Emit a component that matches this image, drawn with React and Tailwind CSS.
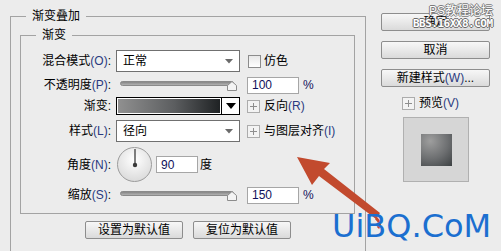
import React from 'react';

const ui = "font-['Liberation_Sans','Noto_Sans_CJK_SC',sans-serif]";

function Key({ children }) {
  return <span className="text-[#2a3a80]">{children}</span>;
}

function Label({ children }) {
  return <span className="w-[90px] shrink-0 text-right whitespace-nowrap">{children}</span>;
}

function Caret() {
  return (
    <svg width="8" height="5" viewBox="0 0 8 5" aria-hidden="true">
      <path d="M0 0h8L4 4.5z" fill="#6b6b6b" />
    </svg>
  );
}

function Select({ value }) {
  return (
    <div className="w-[124px] h-[22px] shrink-0 border border-[#707070] bg-white flex items-center justify-between pl-[6px] pr-[6px]">
      <span>{value}</span>
      <Caret />
    </div>
  );
}

function Slider() {
  return (
    <svg width="124" height="14" viewBox="0 0 124 14" className="shrink-0" aria-hidden="true">
      <defs>
        <linearGradient id="trk" x1="0" y1="0" x2="0" y2="1">
          <stop offset="0" stopColor="#7f7f7f" />
          <stop offset="1" stopColor="#b9b9b9" />
        </linearGradient>
      </defs>
      <rect x="4.5" y="3.5" width="113" height="4" rx="2" fill="url(#trk)" stroke="#8a8a8a" />
      <path d="M116 3.5 L120.5 7.5 V12.5 H111.5 V7.5 Z" fill="#f4f4f4" stroke="#8c8c8c" />
    </svg>
  );
}

function NumBox({ value, w = 'w-[52px]' }) {
  return (
    <div className={`${w} h-[17px] shrink-0 border border-[#a6a6a6] bg-white pl-[4px] flex items-center text-[#10105a]`}>
      {value}
    </div>
  );
}

function PlusBox() {
  return (
    <div className="w-[13px] h-[13px] shrink-0 border border-[#acacac] bg-[#f3f3f3] flex items-center justify-center">
      <svg width="7" height="7" viewBox="0 0 7 7" aria-hidden="true">
        <path d="M3.5 0v7M0 3.5h7" stroke="#8e8e8e" strokeWidth="1" />
      </svg>
    </div>
  );
}

function Dial() {
  return (
    <div className="ml-[1px] w-[35px] h-[35px] shrink-0 rounded-full border border-[#9c9c9c] bg-[radial-gradient(circle_at_50%_35%,#ffffff,#e4e4e4_60%,#d2d2d2)] flex justify-center">
      <svg width="6" height="19" viewBox="0 0 6 19" className="mt-[1px]" aria-hidden="true">
        <path d="M3 0v16" stroke="#4a4a4a" strokeWidth="1.4" />
        <circle cx="3" cy="16" r="2.2" fill="#3a3a3a" />
      </svg>
    </div>
  );
}

function Btn({ children, className = '' }) {
  return (
    <div className={`h-[18px] shrink-0 border border-[#8d8d8d] rounded-[2px] bg-[linear-gradient(#f7f7f7,#e9e9e9_50%,#dadada)] flex items-center justify-center ${className}`}>
      {children}
    </div>
  );
}

export default function App() {
  return (
    <div className={`${ui} relative w-[501px] h-[251px] overflow-hidden bg-[#ececec] text-[12px] leading-[14px] text-black flex`}>
      <div className="pl-[10px] pt-[9px]">
        <fieldset className="w-[356px] h-[270px] border border-[#a3a3a3] pl-[9px]">
          <legend className="ml-[6px] px-[6px] leading-[14px]">渐变叠加</legend>
          <fieldset className="mt-[5px] w-[335px] border border-[#a3a3a3] pt-[8px] pb-[9px]">
            <legend className="ml-[15px] px-[6px] leading-[14px]">渐变</legend>

            <div className="flex items-center h-[22px]">
              <Label>混合模式<Key>(O)</Key>:</Label>
              <div className="ml-[5px]"><Select value="正常" /></div>
              <div className="ml-[8px] w-[13px] h-[13px] border border-[#8c8c8c] bg-[linear-gradient(#e8e8e8,#ffffff)]" />
              <span className="ml-[3px]">仿色</span>
            </div>

            <div className="flex items-center h-[18px] mt-[4px]">
              <Label>不透明度<Key>(P)</Key>:</Label>
              <div className="ml-[5px]"><Slider /></div>
              <div className="ml-[7px]"><NumBox value="100" /></div>
              <span className="ml-[4px] text-[#10105a]">%</span>
            </div>

            <div className="flex items-center h-[18px] mt-[3px]">
              <Label>渐变:</Label>
              <div className="ml-[5px] w-[124px] h-[18px] border border-black bg-white flex">
                <div className="flex-1 m-[1px] bg-[linear-gradient(90deg,#909090,#5c5e60_55%,#1f2224)]" />
                <div className="w-[18px] border-l border-black flex items-center justify-center">
                  <svg width="10" height="6" viewBox="0 0 10 6" aria-hidden="true">
                    <path d="M0 0h10L5 6z" fill="#000" />
                  </svg>
                </div>
              </div>
              <div className="ml-[7px]"><PlusBox /></div>
              <span className="ml-[4px]">反向<Key>(R)</Key></span>
            </div>

            <div className="flex items-center h-[22px] mt-[5px]">
              <Label>样式<Key>(L)</Key>:</Label>
              <div className="ml-[5px]"><Select value="径向" /></div>
              <div className="ml-[7px]"><PlusBox /></div>
              <span className="ml-[4px]">与图层对齐<Key>(I)</Key></span>
            </div>

            <div className="flex items-center h-[35px] mt-[5px]">
              <Label>角度<Key>(N)</Key>:</Label>
              <div className="ml-[5px]"><Dial /></div>
              <div className="ml-[4px]"><NumBox value="90" w="w-[42px]" /></div>
              <span className="ml-[2px]">度</span>
            </div>

            <div className="flex items-center h-[18px] mt-[4px]">
              <Label>缩放<Key>(S)</Key>:</Label>
              <div className="ml-[5px]"><Slider /></div>
              <div className="ml-[7px]"><NumBox value="150" /></div>
              <span className="ml-[4px] text-[#10105a]">%</span>
            </div>
          </fieldset>

          <div className="mt-[7px] flex justify-center gap-[10px] pr-[9px]">
            <Btn className="w-[98px]">设置为默认值</Btn>
            <Btn className="w-[98px]">复位为默认值</Btn>
          </div>
        </fieldset>
      </div>

      <div className="ml-[15px] pt-[13px] flex flex-col">
        <Btn className="w-[109px]">确定</Btn>
        <Btn className="w-[109px] mt-[10px]">取消</Btn>
        <Btn className="w-[109px] mt-[10px]">新建样式<Key>(W)</Key>...</Btn>
        <div className="mt-[10px] ml-[21px] flex items-center h-[12px]">
          <PlusBox />
          <span className="ml-[4px]">预览<Key>(V)</Key></span>
        </div>
        <div className="mt-[8px] ml-[22px] w-[66px] h-[65px] border border-[#b0b0b0] bg-[#d6d6d6] flex items-center justify-center">
          <div className="w-[31px] h-[32px] bg-[radial-gradient(circle_at_30%_22%,#9e9e9e,#6c6e70_55%,#3d4143)]" />
        </div>
      </div>

      <svg className="absolute inset-0 pointer-events-none" width="501" height="251" viewBox="0 0 501 251" aria-hidden="true">
        <path d="M297 157 L330 163 L324 169 L380 213 L376 219 L319 176 L312 185 Z" fill="#c24a2e" />
        <path d="M376 218 q6 6 2 10" stroke="#c24a2e" strokeWidth="3" fill="none" />
      </svg>

      <div className="absolute left-[332px] top-[210px] font-['DejaVu_Sans',sans-serif] text-[32px] leading-none text-[#1b6fd0] whitespace-nowrap">
        UiBQ.CoM
      </div>
      <div className="absolute left-[429px] top-[4px] text-[12px] leading-[14px] text-white whitespace-nowrap [text-shadow:1px_0_#7a7a7a,-1px_0_#7a7a7a,0_1px_#7a7a7a,0_-1px_#7a7a7a]">
        PS教程论坛
      </div>
      <div className="absolute left-[413px] top-[18px] font-['DejaVu_Sans_Mono',monospace] font-bold text-[11px] leading-[12px] text-white whitespace-nowrap tracking-[-0.5px] [text-shadow:1px_0_#6a6a6a,-1px_0_#6a6a6a,0_1px_#6a6a6a,0_-1px_#6a6a6a]">
        BBS.16XX8.COM
      </div>
    </div>
  );
}
